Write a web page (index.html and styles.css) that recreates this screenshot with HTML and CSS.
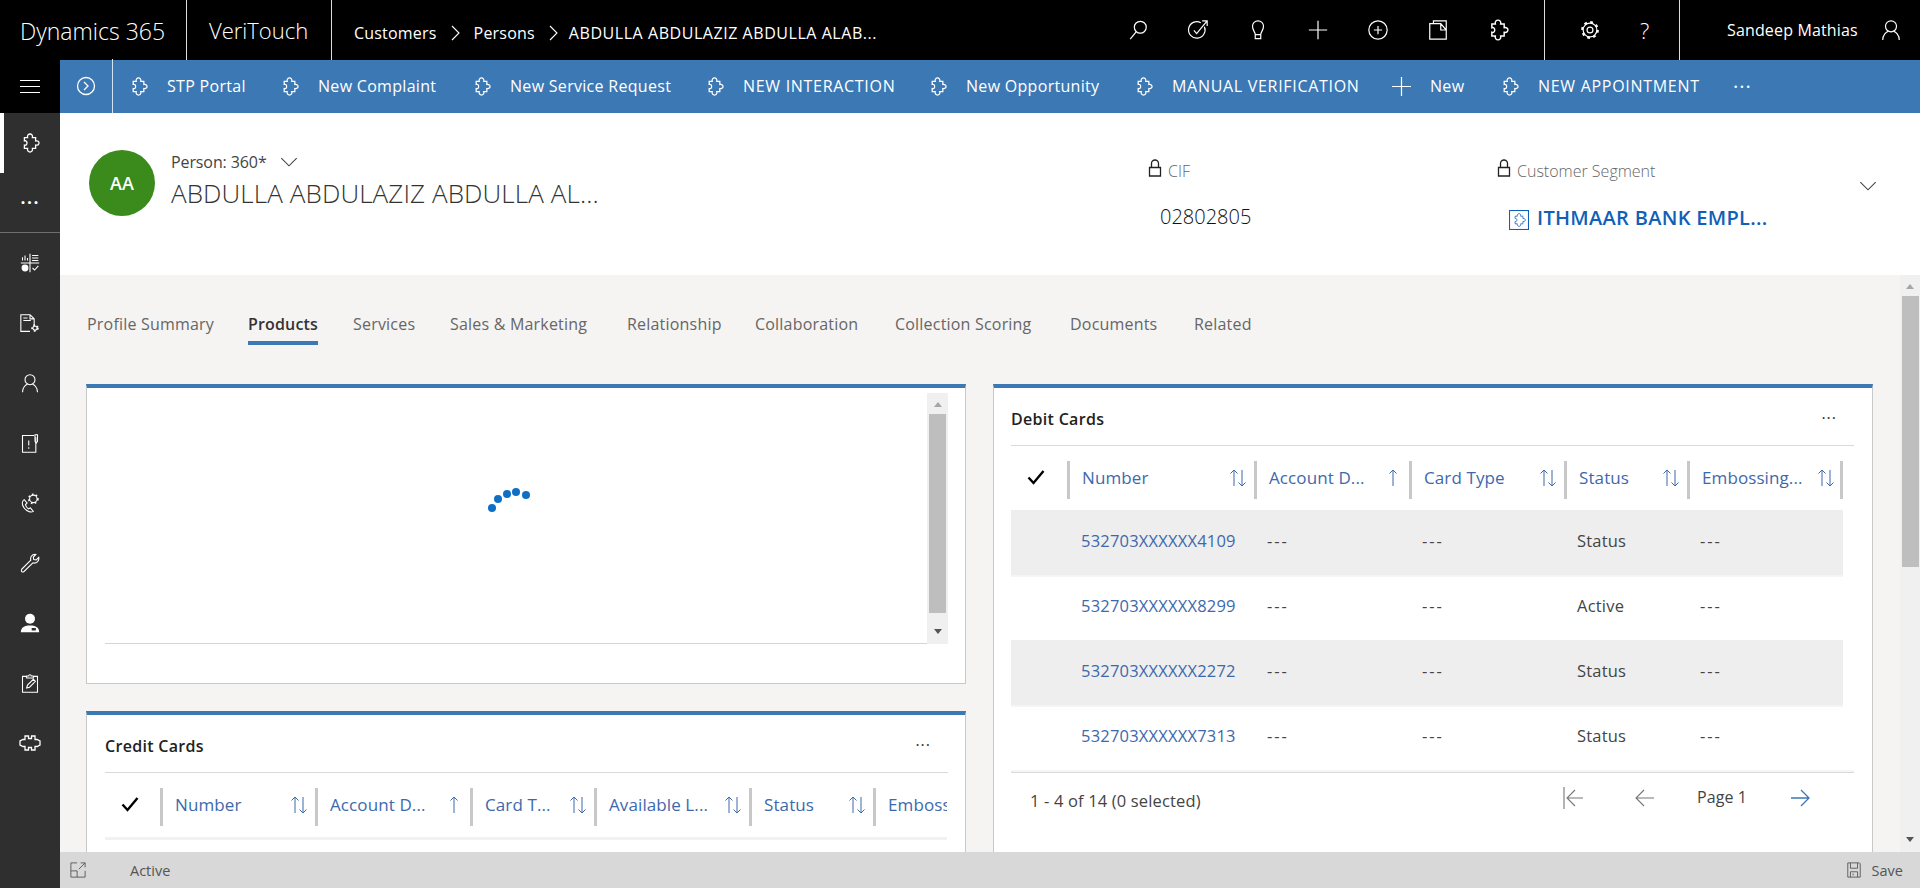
FILE: index.html
```html
<!DOCTYPE html>
<html>
	<head>
		<meta charset="utf-8"/>
		<title>Person: 360 - Dynamics 365</title>
		<link rel="stylesheet" href="styles.css">
	</head>
	<body>
		<svg class="sprite" width="0" height="0">
			<symbol id="i-puzzle" viewBox="0 0 20 20"><path d="M7.6 4.6C7 2.2 8.5 1 10 1s3 1.200 2.400 3.600h3.200v3.300c2.400-.5 3.400.9 3.400 2.100s-1 2.600-3.400 2.100v3.300h-3.200c.6 2.400-.9 3.600-2.400 3.600s-3-1.200-2.400-3.600H4.400v-3.300c1.700.5 2.600-.6 2.600-2.100S6.100 7.400 4.400 7.900V4.600z"/></symbol>
			<symbol id="i-puzzle-h" viewBox="0 0 22 20"><path d="M6 3h3.500v2.500h3V3H16v3.500h2l3 1.500v4l-3 1.500h-2V17h-3.500v-2.500h-3V17H6v-3.500H4L1 12V8l3-1.500h2z"/></symbol>
			<symbol id="i-sort" viewBox="0 0 18 20"><path d="M5 18V2M1.500 5.500L5 2l3.500 3.500M13 2v16M9.500 14.500L13 18l3.500-3.500"/></symbol>
			<symbol id="i-up" viewBox="0 0 18 20"><path d="M9 18V2M5.500 5.500L9 2l3.500 3.500"/></symbol>
			<symbol id="i-down" viewBox="0 0 16 10"><path d="M1 1l7 7 7-7"/></symbol>
			<symbol id="i-check" viewBox="0 0 20 20"><path d="M2.500 10.500l5 5.500L17.500 4"/></symbol>
			<symbol id="i-lock" viewBox="0 0 14 20"><path d="M1.500 9.500h11V18h-11zM3.500 9.500V5.500a3.500 3.500 0 0 1 7 0v4"/></symbol>
		</svg>

		<div class="topbar">
			<div class="brand">Dynamics 365</div>
			<div class="app-name">VeriTouch</div>
			<div class="crumbs">
				<span>Customers</span>
				<svg class="crumb-sep" viewBox="0 0 10 16"><path d="M2 1l7 7-7 7"/></svg>
				<span>Persons</span>
				<svg class="crumb-sep" viewBox="0 0 10 16"><path d="M2 1l7 7-7 7"/></svg>
				<span class="crumb-last">ABDULLA ABDULAZIZ ABDULLA ALAB...</span>
			</div>
			<div class="top-icons">
				<svg class="ico" viewBox="0 0 24 24"><circle cx="14.500" cy="9" r="6.500"/><path d="M10 14L3.500 22"/></svg>
				<svg class="ico" viewBox="0 0 24 24"><path d="M19 8.500A9 9 0 1 1 15 4"/><path d="M7.500 12.500l3 3.500L22 2M16.500 2H22v5.500"/></svg>
				<svg class="ico" viewBox="0 0 24 24"><path d="M9 17c0-3-3-4.500-3-9a6 6 0 0 1 12 0c0 4.500-3 6-3 9zM9 17v4.500h6V17"/></svg>
				<svg class="ico" viewBox="0 0 24 24"><path d="M12 2v20M2 12h20"/></svg>
				<svg class="ico" viewBox="0 0 24 24"><circle cx="12" cy="12" r="10"/><path d="M12 7.500v9M7.500 12h9"/></svg>
				<svg class="ico" viewBox="0 0 24 24"><path d="M3 5h12l6 7v10H3zM15 5v7h6M7 5V2h14v10"/></svg>
				<svg class="ico"><use href="#i-puzzle"/></svg>
			</div>
			<div class="top-tools">
				<svg class="ico" viewBox="0 0 24 24"><circle cx="12" cy="12" r="8.500" class="gear-teeth"/><circle cx="12" cy="12" r="7.500"/><circle cx="12" cy="12" r="3.200"/></svg>
				<span class="help">?</span>
			</div>
			<div class="top-user">
				<span>Sandeep Mathias</span>
				<svg class="ico" viewBox="0 0 24 24"><circle cx="12" cy="8" r="6"/><path d="M3 23c0-6 4-9 6-9.500M21 23c0-6-4-9-6-9.500"/></svg>
			</div>
		</div>

		<div class="shell">
			<div class="sidenav">
				<div class="nav-toggle"><span></span><span></span><span></span></div>
				<div class="nav-item nav-active"><svg class="ico"><use href="#i-puzzle"/></svg></div>
				<div class="nav-item nav-more">&middot;&middot;&middot;</div>
				<div class="nav-item">
					<svg class="ico" viewBox="0 0 24 24"><path d="M1 12h22M12 1v22" /><path d="M3 9V5M6 9V3M9 9V6M14.500 3H22M14.500 6H22M14.500 9H22"/><circle cx="6" cy="18" r="3.500" fill="#fff"/><path d="M15 18l2.500 2.500 4.500-5"/></svg>
				</div>
				<div class="nav-item">
					<svg class="ico" viewBox="0 0 24 24"><path d="M17 16V7l-5-5H1v20h11M12 2v5h5M4 6h5M4 9h9"/><circle cx="18" cy="18" r="3.500" class="gear-teeth small-teeth"/><circle cx="18" cy="18" r="2.500"/></svg>
				</div>
				<div class="nav-item">
					<svg class="ico" viewBox="0 0 24 24"><circle cx="12" cy="8" r="6"/><path d="M3 23c0-6 4-9 6-9.500M21 23c0-6-4-9-6-9.500"/></svg>
				</div>
				<div class="nav-item">
					<svg class="ico" viewBox="0 0 24 24"><path d="M17 3H3v20h16V5"/><path d="M18 2h3v8l-1.500 2L18 10zM10.500 9v6M10.500 17v2"/></svg>
				</div>
				<div class="nav-item">
					<svg class="ico" viewBox="0 0 24 24"><path d="M5 8C2 10 2 14 5 18s8 6 11 4l-3.500-4-2.500 1c-1.500-1-3-3-3.500-5l2-2z"/><circle cx="16" cy="7" r="4.500"/><circle cx="16" cy="7" r="5.500" class="gear-teeth small-teeth"/></svg>
				</div>
				<div class="nav-item">
					<svg class="ico" viewBox="0 0 24 24"><path d="M2 19.500l11-11c-1-3 1-7 5-7l1 .3-3 3 .5 3 3 .5 3-3c1 4-3 8-7 6.500l-11 10.700c-2 1-3.500-.8-2.500-2.500z"/></svg>
				</div>
				<div class="nav-item">
					<svg class="ico solid" viewBox="0 0 24 24"><circle cx="12" cy="7" r="6"/><path d="M1 23c0-6 5-8 11-8s11 2 11 8z"/><rect x="14" y="18" width="5" height="3" class="badge-hole"/></svg>
				</div>
				<div class="nav-item">
					<svg class="ico" viewBox="0 0 24 24"><path d="M8 4H3v19h18V4h-5M8 6V3.500h2.500a1.500 1.500 0 0 1 3 0H16V6zM8 18l1-3.500 7-7 2.500 2.500-7 7z"/></svg>
				</div>
				<div class="nav-item">
					<svg class="ico ico-wide"><use href="#i-puzzle-h"/></svg>
				</div>
			</div>

			<div class="main">
				<div class="cmdbar">
					<div class="cmd-toggle">
						<svg class="ico" viewBox="0 0 20 20"><circle cx="10" cy="10" r="8.500"/><path d="M8 6l4 4-4 4"/></svg>
					</div>
					<div class="cmd-items">
						<div class="cmd"><svg class="ico"><use href="#i-puzzle"/></svg><span>STP Portal</span></div>
						<div class="cmd"><svg class="ico"><use href="#i-puzzle"/></svg><span>New Complaint</span></div>
						<div class="cmd"><svg class="ico"><use href="#i-puzzle"/></svg><span>New Service Request</span></div>
						<div class="cmd cmd-caps"><svg class="ico"><use href="#i-puzzle"/></svg><span>NEW INTERACTION</span></div>
						<div class="cmd"><svg class="ico"><use href="#i-puzzle"/></svg><span>New Opportunity</span></div>
						<div class="cmd cmd-caps"><svg class="ico"><use href="#i-puzzle"/></svg><span>MANUAL VERIFICATION</span></div>
						<div class="cmd"><svg class="ico" viewBox="0 0 20 20"><path d="M10 0v20M0 10h20"/></svg><span>New</span></div>
						<div class="cmd cmd-caps"><svg class="ico"><use href="#i-puzzle"/></svg><span>NEW APPOINTMENT</span></div>
						<div class="cmd cmd-more">&middot;&middot;&middot;</div>
					</div>
				</div>

				<div class="record-head">
					<div class="avatar">AA</div>
					<div class="record-title">
						<div class="form-name">Person: 360* <svg class="chev"><use href="#i-down"/></svg></div>
						<div class="record-name">ABDULLA ABDULAZIZ ABDULLA AL...</div>
					</div>
					<div class="field field-cif">
						<div class="field-label"><svg class="lock"><use href="#i-lock"/></svg>CIF</div>
						<div class="field-value">02802805</div>
					</div>
					<div class="field field-seg">
						<div class="field-label"><svg class="lock"><use href="#i-lock"/></svg>Customer Segment</div>
						<div class="field-link">
							<svg class="seg-icon" viewBox="0 0 20 20"><rect x=".5" y=".5" width="19" height="19"/><use href="#i-puzzle" x="3" y="3" width="14" height="14"/></svg>
							<span>ITHMAAR BANK EMPL...</span>
						</div>
					</div>
					<svg class="chev head-chev"><use href="#i-down"/></svg>
				</div>

				<div class="content">
					<div class="page">
						<div class="tabs">
							<span class="tab">Profile Summary</span>
							<span class="tab tab-on">Products</span>
							<span class="tab">Services</span>
							<span class="tab">Sales &amp; Marketing</span>
							<span class="tab">Relationship</span>
							<span class="tab">Collaboration</span>
							<span class="tab">Collection Scoring</span>
							<span class="tab">Documents</span>
							<span class="tab">Related</span>
						</div>
						<div class="columns">
							<div class="col">
								<div class="card card-loading">
									<div class="frame">
										<div class="frame-body">
											<svg class="spinner" viewBox="0 0 44 26"><circle cx="5" cy="21" r="4"/><circle cx="11" cy="12" r="4"/><circle cx="20" cy="7" r="4"/><circle cx="29" cy="5" r="4"/><circle cx="39" cy="8" r="4"/></svg>
										</div>
										<div class="frame-scroll">
											<span class="arrow-up"></span>
											<span class="frame-thumb"></span>
											<span class="arrow-down"></span>
										</div>
									</div>
								</div>
								<div class="card card-credit">
									<div class="card-head"><span>Credit Cards</span><span class="card-more">&middot;&middot;&middot;</span></div>
									<div class="grid-clip">
										<div class="grid-head credit-cols">
											<div class="hcheck"><svg class="check"><use href="#i-check"/></svg></div>
											<div class="hcell"><span>Number</span><svg class="sort"><use href="#i-sort"/></svg></div>
											<div class="hcell"><span>Account D...</span><svg class="sort"><use href="#i-up"/></svg></div>
											<div class="hcell"><span>Card T...</span><svg class="sort"><use href="#i-sort"/></svg></div>
											<div class="hcell"><span>Available L...</span><svg class="sort"><use href="#i-sort"/></svg></div>
											<div class="hcell"><span>Status</span><svg class="sort"><use href="#i-sort"/></svg></div>
											<div class="hcell"><span>Embossing...</span></div>
										</div>
										<div class="credit-strip"></div>
									</div>
								</div>
							</div>
							<div class="col">
								<div class="card card-debit">
									<div class="card-head"><span>Debit Cards</span><span class="card-more">&middot;&middot;&middot;</span></div>
									<div class="grid-head debit-cols">
										<div class="hcheck"><svg class="check"><use href="#i-check"/></svg></div>
										<div class="hcell"><span>Number</span><svg class="sort"><use href="#i-sort"/></svg></div>
										<div class="hcell"><span>Account D...</span><svg class="sort"><use href="#i-up"/></svg></div>
										<div class="hcell"><span>Card Type</span><svg class="sort"><use href="#i-sort"/></svg></div>
										<div class="hcell"><span>Status</span><svg class="sort"><use href="#i-sort"/></svg></div>
										<div class="hcell hcell-last"><span>Embossing...</span><svg class="sort"><use href="#i-sort"/></svg></div>
									</div>
									<div class="grid-row debit-cols row-alt">
										<a class="cell-link">532703XXXXXX4109</a><span class="dash">---</span><span class="dash">---</span><span>Status</span><span class="dash">---</span>
									</div>
									<div class="grid-row debit-cols">
										<a class="cell-link">532703XXXXXX8299</a><span class="dash">---</span><span class="dash">---</span><span>Active</span><span class="dash">---</span>
									</div>
									<div class="grid-row debit-cols row-alt">
										<a class="cell-link">532703XXXXXX2272</a><span class="dash">---</span><span class="dash">---</span><span>Status</span><span class="dash">---</span>
									</div>
									<div class="grid-row debit-cols">
										<a class="cell-link">532703XXXXXX7313</a><span class="dash">---</span><span class="dash">---</span><span>Status</span><span class="dash">---</span>
									</div>
									<div class="grid-foot">
										<span class="foot-count">1 - 4 of 14 (0 selected)</span>
										<div class="pager">
											<svg class="pg" viewBox="0 0 22 24"><path d="M1 1v22M20 12H5M12 4l-8 8 8 8"/></svg>
											<svg class="pg" viewBox="0 0 22 24"><path d="M21 12H3M11 4l-8 8 8 8"/></svg>
											<span class="pg-label">Page 1</span>
											<svg class="pg pg-next" viewBox="0 0 22 24"><path d="M1 12h18M11 4l8 8-8 8"/></svg>
										</div>
									</div>
								</div>
							</div>
						</div>
					</div>
					<div class="scrollbar">
						<span class="arrow-up"></span>
						<span class="scroll-thumb"></span>
						<span class="scroll-fill"></span>
						<span class="arrow-down"></span>
					</div>
				</div>

				<div class="statusbar">
					<div class="status-left">
						<svg class="status-ico" viewBox="0 0 18 18"><path d="M8 1H1v16h16v-7M1 10h7v7M10 8l7-7M12 1h5v5"/></svg>
						<span>Active</span>
					</div>
					<div class="status-save">
						<svg class="status-ico" viewBox="0 0 18 18"><path d="M2 1h13l1 1v15H2zM5 1v6h8V1M5 17v-6h8v6M8 13v2"/></svg>
						<span>Save</span>
					</div>
				</div>
			</div>
		</div>
	</body>
</html>
```

FILE: styles.css
```css
html, body{margin: 0;height: 100%;overflow: hidden;}
body{font-family: 'Open Sans', sans-serif;font-size: 14px;color: #444;width: 1920px;height: 888px;}
svg{display: block;}
.sprite{position: absolute;}
.ico{width: 20px;height: 20px;fill: none;stroke: #fff;stroke-width: 1.3;flex: none;}
.ico-wide{width: 22px;}
.gear-teeth{stroke-width: 2.4;stroke-dasharray: 3 3.670;}
.small-teeth{stroke-dasharray: 2 2.700;stroke-width: 2;}

/* top black bar */
.topbar{height: 60px;background: #000;color: #fff;display: flex;align-items: stretch;}
.brand{width: 166px;padding-left: 20px;font-size: 23px;font-weight: 300;line-height: 62px;border-right: 1px solid #ddd;white-space: nowrap;}
.app-name{width: 122px;padding-left: 22px;font-size: 22px;font-weight: 300;line-height: 60px;border-right: 1px solid #ddd;}
.crumbs{width: 747px;padding: 6px 0 0 22px;display: flex;align-items: center;font-size: 16px;box-sizing: border-box;white-space: nowrap;letter-spacing: .2px;}
.crumb-sep{width: 10px;height: 16px;fill: none;stroke: #fff;stroke-width: 1.1;margin: 0 14px 0 13px;}
.crumb-last{letter-spacing: .55px;margin-left: -3px;}
.top-icons{width: 465px;padding-left: 48px;box-sizing: border-box;display: grid;grid-template-columns: repeat(7, 60px);align-items: center;}
.top-icons .ico{width: 22px;height: 22px;}
.top-tools{width: 136px;border-left: 1px solid #ddd;border-right: 1px solid #ddd;display: flex;align-items: center;padding-left: 34px;box-sizing: border-box;}
.top-tools .ico{width: 22px;height: 22px;}
.help{font-size: 22px;font-weight: 300;margin-left: 39px;}
.top-user{flex: 1;display: flex;align-items: center;padding-left: 47px;font-size: 16px;white-space: nowrap;letter-spacing: .15px;}
.top-user .ico{width: 22px;height: 22px;margin-left: 22px;}

.shell{display: flex;height: 828px;}

/* left nav */
.sidenav{width: 60px;background: #2f2f2f;flex: none;}
.nav-toggle{height: 53px;background: #000;display: flex;flex-direction: column;align-items: center;justify-content: center;gap: 5px;}
.nav-toggle span{display: block;width: 20px;height: 1px;background: #fff;}
.nav-item{height: 60px;display: flex;align-items: center;justify-content: center;color: #fff;}
.nav-active{box-shadow: inset 4px 0 0 #fff;}
.nav-more{font-size: 20px;font-weight: 600;letter-spacing: 1px;border-bottom: 1px solid #6f6f6f;height: 59px;}
.solid{fill: #fff;stroke: none;}
.badge-hole{fill: #2f2f2f;}

.main{flex: 1;display: flex;flex-direction: column;min-width: 0;}

/* command bar */
.cmdbar{height: 53px;background: #3c78b4;color: #fff;display: flex;flex: none;}
.cmd-toggle{width: 52px;border-right: 1px solid #d5e3f0;margin-top: -1px;display: flex;align-items: center;justify-content: center;}
.cmd-toggle .ico{width: 20px;height: 20px;}
.cmd-items{display: grid;grid-template-columns: 151px 192px 233px 223px 206px 258px 108px 205px 60px;padding-left: 16px;align-items: center;}
.cmd{display: flex;align-items: center;font-size: 16px;white-space: nowrap;letter-spacing: .3px;}
.cmd-caps{letter-spacing: .7px;}
.cmd .ico{width: 19px;height: 19px;margin-right: 19px;}
.cmd span{margin-top: -2px;}
.cmd-more{font-size: 20px;font-weight: 400;letter-spacing: 1px;padding-left: 28px;}

/* record header */
.record-head{height: 162px;background: #fff;display: flex;padding-left: 29px;flex: none;box-sizing: border-box;}
.avatar{width: 66px;height: 66px;border-radius: 50%;background: #3a8a1c;color: #fff;font-size: 18px;font-weight: 600;text-align: center;line-height: 66px;margin-top: 37px;margin-right: 16px;flex: none;}
.record-title{width: 977px;padding-top: 38px;flex: none;}
.form-name{display: flex;align-items: center;font-size: 16px;color: #444;line-height: 22px;letter-spacing: -.1px;}
.chev{width: 18px;height: 11px;fill: none;stroke: #444;stroke-width: 1;}
.form-name .chev{margin-left: 13px;}
.record-name{font-size: 26px;font-weight: 300;color: #333;line-height: 34px;margin-top: 3px;letter-spacing: .1px;white-space: nowrap;}
.field{padding-top: 46px;flex: none;}
.field-cif{width: 349px;}
.field-seg{width: 362px;}
.field-label{display: flex;align-items: center;font-size: 16px;font-weight: 300;color: #666;height: 24px;white-space: nowrap;}
.lock{width: 14px;height: 20px;fill: none;stroke: #222;stroke-width: 1.3;margin-right: 6px;margin-top: -6px;}
.field-value{font-size: 20px;font-weight: 300;color: #111;margin: 20px 0 0 12px;line-height: 28px;}
.field-link{display: flex;align-items: center;margin: 20px 0 0 12px;height: 28px;color: #1160b7;font-size: 20px;font-weight: 600;white-space: nowrap;letter-spacing: .3px;}
.seg-icon{width: 20px;height: 20px;fill: none;stroke: #1160b7;stroke-width: 1.1;margin: 6px 8px 0 0;}
.head-chev{margin-top: 68px;}

/* page */
.content{flex: 1;min-height: 0;background: #f5f4f3;display: flex;}
.page{width: 1840px;flex: none;overflow: hidden;}
.tabs{display: grid;grid-template-columns: 161px 105px 97px 177px 128px 140px 175px 124px 60px;margin-left: 27px;padding-top: 37px;height: 33px;}
.tab{font-size: 16px;color: #666;white-space: nowrap;justify-self: start;height: 33px;line-height: 24px;letter-spacing: .2px;}
.tab-on{font-weight: 600;color: #333;border-bottom: 4px solid #3c78b4;height: 29px;letter-spacing: .15px;}
.columns{display: grid;grid-template-columns: 880px 880px;column-gap: 27px;padding-left: 26px;margin-top: 39px;}
.col{display: flex;flex-direction: column;gap: 27px;}
.card{background: #fff;border: 1px solid #c8c8c8;border-top: 4px solid #3c78b4;box-sizing: border-box;flex: none;}

.card-loading{height: 300px;padding: 5px 17px 0 18px;}
.frame{display: flex;height: 251px;}
.frame-body{flex: 1;border-bottom: 1px solid #d4d4d4;position: relative;}
.spinner{position: absolute;left: 382px;top: 94px;width: 44px;height: 26px;fill: #0f6fc6;}
.frame-scroll{width: 21px;background: #f0f0f0;display: flex;flex-direction: column;align-items: center;}
.frame-thumb{display: block;width: 17px;height: 199px;background: #bebebe;}
.arrow-up, .arrow-down{display: block;width: 0;height: 0;border-left: 4px solid transparent;border-right: 4px solid transparent;}
.frame-scroll .arrow-up{border-bottom: 5px solid #a6a6a6;margin: 9px 0 7px;}
.frame-scroll .arrow-down{border-top: 5px solid #555;margin: 16px 0 0;}

.card-head{display: flex;justify-content: space-between;align-items: center;border-bottom: 1px solid #d9d9d9;font-size: 16px;font-weight: 600;color: #222;letter-spacing: .3px;padding: 5px 17px 0 0;box-sizing: border-box;height: 58px;}
.card-more{font-size: 16px;font-weight: 400;letter-spacing: 1px;color: #333;margin-top: -3px;}
.card-credit{padding: 0 17px 0 18px;height: 200px;}
.card-debit{padding: 0 18px 0 17px;height: 520px;}
.grid-clip{overflow: hidden;width: 842px;height: 67px;}
.grid-head{display: grid;height: 64px;align-items: center;box-sizing: border-box;}
.credit-cols{grid-template-columns: 55px 155px 155px 124px 155px 124px 124px;width: 892px;}
.debit-cols{grid-template-columns: 56px 187px 155px 155px 123px 156px;width: 832px;}
.hcheck{display: flex;justify-content: center;padding-right: 6px;margin-top: -3px;}
.check{width: 20px;height: 20px;fill: none;stroke: #000;stroke-width: 2.4;}
.hcell{height: 38px;border-left: 3px solid #c8c8c8;padding: 0 7px 4px 12px;display: flex;align-items: center;justify-content: space-between;font-size: 17px;color: #3d69ac;margin-top: 3px;white-space: nowrap;letter-spacing: .1px;box-sizing: border-box;}
.hcell-last{border-right: 3px solid #c8c8c8;padding-right: 5px;}
.sort{width: 18px;height: 20px;fill: none;stroke: #3d69ac;stroke-width: 1;flex: none;}
.credit-strip{height: 3px;background: #f2f2f2;width: 842px;}
.grid-row{height: 65px;align-items: center;display: grid;font-size: 16.500px;color: #444;padding-bottom: 5px;box-sizing: border-box;letter-spacing: .2px;}
.grid-row > :first-child{grid-column: 2;padding-left: 14px;}
.grid-row > span{padding-left: 13px;}
.dash{letter-spacing: 2px;}
.row-alt{background: #eee;box-shadow: 0 2px 0 #f5f5f5;}
.cell-link{color: #3d69ac;white-space: nowrap;}
.grid-foot{margin-top: 2px;width: 843px;border-top: 1px solid #d9d9d9;box-shadow: 0 -2px 0 #f5f5f5;display: flex;justify-content: space-between;align-items: flex-start;height: 60px;font-size: 16.500px;color: #444;}
.foot-count{padding: 16px 0 0 19px;letter-spacing: .15px;}
.pager{display: grid;grid-template-columns: 70px 64px 93px 30px;align-items: center;padding: 13px 34px 0 0;font-size: 16px;}
.pg{width: 22px;height: 24px;fill: none;stroke: #777;stroke-width: 1.1;}
.pg-next{stroke: #3c78b4;stroke-width: 1.3;}
.pg-label{letter-spacing: .1px;margin-top: -2px;}

/* page scrollbar */
.scrollbar{width: 20px;flex: none;background: #f0f0f0;display: flex;flex-direction: column;align-items: center;}
.scrollbar .arrow-up{border-bottom: 5px solid #a6a6a6;margin: 9px 0 7px;}
.scroll-thumb{display: block;width: 17px;height: 271px;background: #bebebe;}
.scroll-fill{display: block;flex: 1;}
.scrollbar .arrow-down{border-top: 5px solid #555;margin-bottom: 10px;}

/* status bar */
.statusbar{height: 36px;background: #d8d8d8;flex: none;display: flex;justify-content: space-between;align-items: center;font-size: 14.500px;color: #555;}
.status-left{display: flex;align-items: center;padding-left: 10px;}
.status-left span{margin-left: 44px;}
.status-ico{width: 16px;height: 16px;fill: none;stroke: #555;stroke-width: 1;}
.status-save{display: flex;align-items: center;padding-right: 17px;}
.status-save span{margin-left: 10px;}
```
